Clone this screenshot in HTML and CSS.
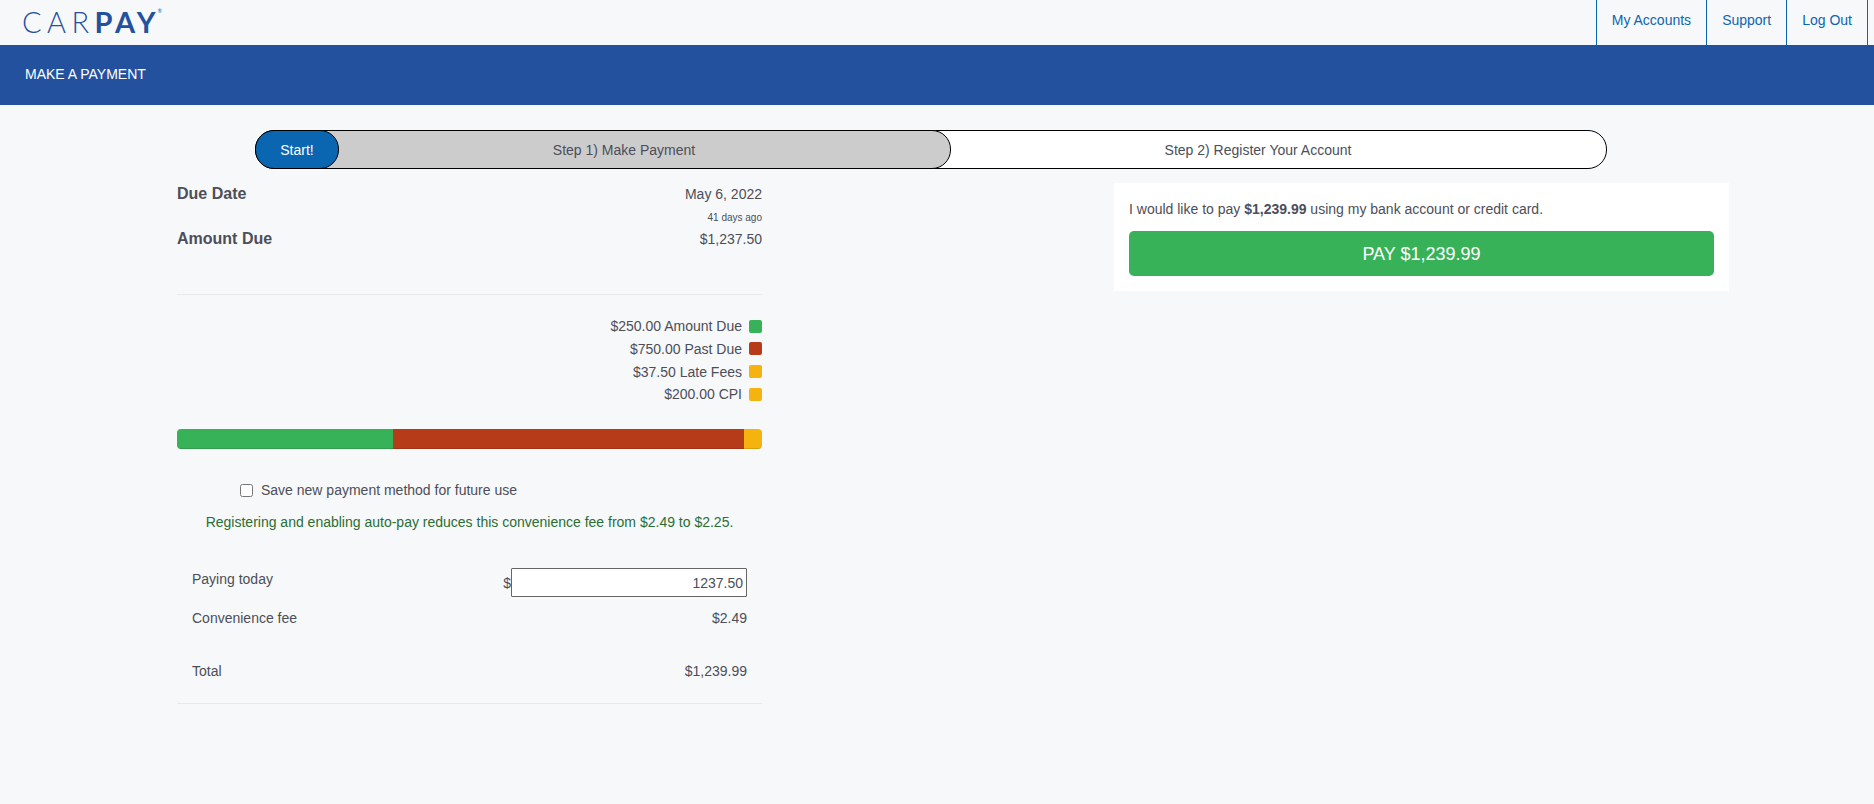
FILE: index.html
```html
<!DOCTYPE html>
<html lang="en">
<head>
<meta charset="utf-8">
<title>Make a Payment</title>
<link rel="stylesheet" href="styles.css">
</head>
<body>
<header class="topbar">
  <div class="logo"><span class="logo-thin">CAR</span><span class="logo-bold">PAY</span><span class="logo-reg">®</span></div>
  <nav class="nav">
    <a class="nav-link">My Accounts</a>
    <a class="nav-link">Support</a>
    <a class="nav-link">Log Out</a>
  </nav>
</header>
<div class="band">MAKE A PAYMENT</div>
<div class="stepper">
  <div class="step step-start">Start!</div>
  <div class="step step-one">Step 1) Make Payment</div>
  <div class="step step-two">Step 2) Register Your Account</div>
</div>
<main class="content">
  <section class="left">
    <div class="due-row"><span class="due-label">Due Date</span><span>May 6, 2022</span></div>
    <div class="days">41 days ago</div>
    <div class="due-row"><span class="due-label">Amount Due</span><span>$1,237.50</span></div>
    <hr class="rule rule-top">
    <ul class="legend">
      <li class="legend-row">$250.00 Amount Due<i class="swatch green"></i></li>
      <li class="legend-row">$750.00 Past Due<i class="swatch red"></i></li>
      <li class="legend-row">$37.50 Late Fees<i class="swatch yellow"></i></li>
      <li class="legend-row">$200.00 CPI<i class="swatch yellow"></i></li>
    </ul>
    <div class="bar">
      <div class="seg green seg-a"></div>
      <div class="seg red seg-b"></div>
      <div class="seg yellow seg-c"></div>
    </div>
    <label class="save"><input class="check" type="checkbox">Save new payment method for future use</label>
    <p class="note">Registering and enabling auto-pay reduces this convenience fee from $2.49 to $2.25.</p>
    <div class="sum sum-pay">
      <span class="pay-label">Paying today</span>
      <span class="pay-field">$<input class="amount" type="text" value="1237.50"></span>
    </div>
    <div class="sum sum-fee"><span>Convenience fee</span><span>$2.49</span></div>
    <div class="sum sum-total"><span>Total</span><span>$1,239.99</span></div>
    <hr class="rule rule-bottom">
  </section>
  <aside class="card">
    <p class="card-text">I would like to pay <b>$1,239.99</b> using my bank account or credit card.</p>
    <button class="pay-btn" type="button">PAY $1,239.99</button>
  </aside>
</main>
</body>
</html>
```

FILE: styles.css
```css
* { box-sizing: border-box; }
html, body { margin: 0; padding: 0; }
body {
  height: 804px;
  overflow: hidden;
  background: #f7f8fa;
  color: #4c4e59;
  font-family: "Liberation Sans", Arial, sans-serif;
  font-size: 14px;
}
.topbar {
  height: 45px;
  display: flex;
  justify-content: space-between;
  padding: 0 6px 0 22px;
}
.logo {
  display: flex;
  align-items: flex-start;
  font-family: Lato, sans-serif;
  font-size: 29px;
  line-height: 44px;
  color: #24519d;
  white-space: nowrap;
}
.logo-thin { font-weight: 300; letter-spacing: 5.4px; }
.logo-bold { font-weight: 700; letter-spacing: 4px; }
.logo-reg { font-size: 5px; line-height: 22px; margin-left: -2px; }
.nav { display: flex; border-right: 1px solid #0b66b1; }
.nav-link {
  display: flex;
  align-items: center;
  padding: 0 15px 5px;
  border-left: 1px solid #0b66b1;
  color: #0b66b1;
}
.band {
  height: 60px;
  padding-left: 25px;
  background: #24519d;
  color: #fff;
  line-height: 58px;
}
.stepper {
  display: flex;
  width: 1352px;
  height: 39px;
  margin: 25px 0 0 255px;
}
.step {
  height: 39px;
  border: 1px solid #000;
  border-radius: 19px;
  line-height: 38px;
  text-align: center;
}
.step-start {
  width: 84px;
  margin-right: -84px;
  position: relative;
  z-index: 3;
  background: #0b66b1;
  color: #fff;
}
.step-one {
  width: 696px;
  padding-left: 42px;
  position: relative;
  z-index: 2;
  background: #ccc;
}
.step-two {
  flex: 1;
  margin-left: -42px;
  background: #fff;
}
.content {
  display: flex;
  margin: 14px 0 0 177px;
}
.left { width: 585px; }
.due-row {
  display: flex;
  justify-content: space-between;
  height: 22px;
  line-height: 22px;
}
.due-label { font-size: 16px; font-weight: 700; }
.days {
  height: 23px;
  padding-top: 7px;
  font-size: 10px;
  line-height: 12px;
  text-align: right;
}
.rule {
  margin: 0;
  border: 0;
  border-top: 1px solid #e8eaed;
}
.rule-top { margin-top: 44px; }
.legend {
  list-style: none;
  margin: 20px 0 0;
  padding: 0;
}
.legend-row {
  display: flex;
  justify-content: flex-end;
  align-items: center;
  height: 22.67px;
}
.swatch {
  width: 13px;
  height: 13px;
  margin-left: 7px;
  border-radius: 2px;
}
.green { background: #38b259; }
.red { background: #b63b19; }
.yellow { background: #f4b30e; }
.bar {
  display: flex;
  height: 20px;
  margin-top: 23.4px;
  border-radius: 4px;
  overflow: hidden;
}
.seg { height: 100%; box-shadow: inset 0 -1px 0 rgba(0, 0, 0, .12); }
.seg-a { width: 216px; }
.seg-b { width: 351px; }
.seg-c { flex: 1; }
.save {
  display: flex;
  align-items: center;
  height: 20px;
  margin: 31px 0 0 63px;
}
.check {
  width: 13px;
  height: 13px;
  margin: 0 8px 0 0;
}
.note {
  margin: 12px 0 0;
  line-height: 20px;
  color: #2a6e33;
  text-align: center;
}
.sum {
  display: flex;
  justify-content: space-between;
  margin: 0 15px;
}
.sum-pay { height: 29px; margin-top: 36px; }
.pay-label { line-height: 22px; }
.pay-field { display: flex; align-items: center; }
.amount {
  width: 236px;
  height: 29px;
  padding: 0 3px;
  border: 1px solid #666;
  border-radius: 1px;
  background: #fff;
  color: #4c4e59;
  font: inherit;
  text-align: right;
}
.sum-fee { margin-top: 11px; line-height: 20px; }
.sum-total { margin-top: 33px; line-height: 20px; }
.rule-bottom { margin-top: 22px; }
.card {
  width: 615px;
  height: 108px;
  margin-left: 352px;
  padding: 16px 15px 0;
  background: #fff;
}
.card-text { margin: 0; line-height: 20px; }
.pay-btn {
  display: block;
  width: 100%;
  height: 45px;
  margin-top: 12px;
  padding-top: 2px;
  border: 0;
  border-radius: 5px;
  background: #38b259;
  color: #fff;
  font: inherit;
  font-size: 18px;
}
```
